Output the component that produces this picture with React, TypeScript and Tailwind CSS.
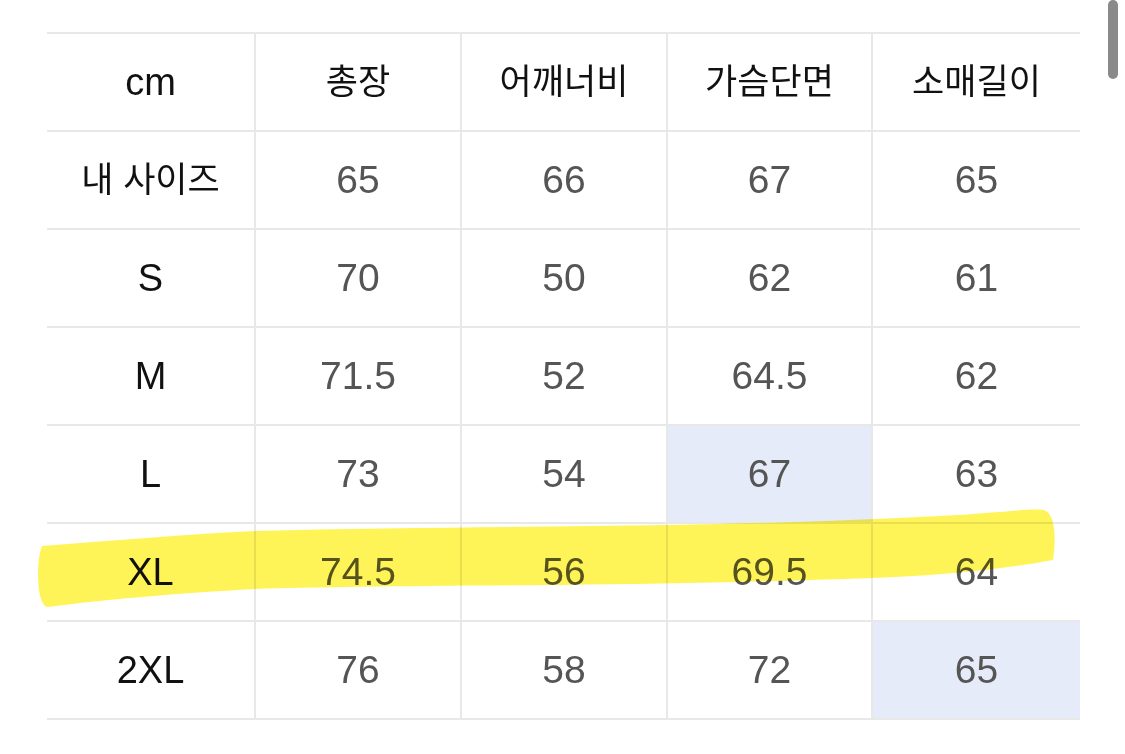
import React from 'react'

const headers = ['cm', '총장', '어깨너비', '가슴단면', '소매길이']

const rows: { label: string; values: string[]; mark?: number }[] = [
	{ label: '내 사이즈', values: ['65', '66', '67', '65'] },
	{ label: 'S', values: ['70', '50', '62', '61'] },
	{ label: 'M', values: ['71.5', '52', '64.5', '62'] },
	{ label: 'L', values: ['73', '54', '67', '63'], mark: 2 },
	{ label: 'XL', values: ['74.5', '56', '69.5', '64'] },
	{ label: '2XL', values: ['76', '58', '72', '65'], mark: 3 },
]

const font = { fontFamily: '"Liberation Sans", Arial, "Noto Sans CJK KR", sans-serif' }

const isKorean = (s: string) => /[\uac00-\ud7a3]/.test(s)

const Label: React.FC<{ text: string }> = ({ text }) => (
	<div
		className={
			'bg-white flex items-center justify-center text-[#111] ' +
			(isKorean(text) ? 'text-[35px]' : 'text-[38px]')
		}
	>
		{text}
	</div>
)

const Highlight: React.FC = () => (
	<svg className="absolute left-0 top-0 pointer-events-none mix-blend-multiply" width="1125" height="754">
		<path
			d="M42 546 C120 540 190 534 255 531 C400 527 560 527 668 525 C780 523 860 520 940 516 C1000 513 1030 508 1044 510 C1056 514 1056 540 1053 560 C1000 570 930 576 873 578 C760 582 660 584 560 585 C420 586 320 587 255 589 C180 593 100 600 48 607 C36 606 36 560 42 546 Z"
			fill="#fff23a"
			opacity="0.85"
		/>
	</svg>
)

export default function App() {
	return (
		<div className="relative w-[1125px] h-[754px] bg-white overflow-hidden" style={font}>
			<div className="pt-[32px] pl-[47px]">
				<div className="w-[1033px] border-y-2 border-[#e8e8e8] bg-[#e8e8e8] grid grid-cols-[207px_204px_204px_203px_207px] auto-rows-[96px] gap-[2px]">
					{headers.map((h) => (
						<Label key={h} text={h} />
					))}
					{rows.map((r) => (
						<React.Fragment key={r.label}>
							<Label text={r.label} />
							{r.values.map((v, i) => (
								<div
									key={i}
									className={
										'flex items-center justify-center text-[39px] text-[#555] ' +
										(r.mark === i ? 'bg-[#e6ebfa]' : 'bg-white')
									}
								>
									{v}
								</div>
							))}
						</React.Fragment>
					))}
				</div>
			</div>
			<Highlight />
			<div className="absolute left-[1108px] top-0 w-[10px] h-[79px] rounded-full bg-[#8a8a8a]" />
		</div>
	)
}
